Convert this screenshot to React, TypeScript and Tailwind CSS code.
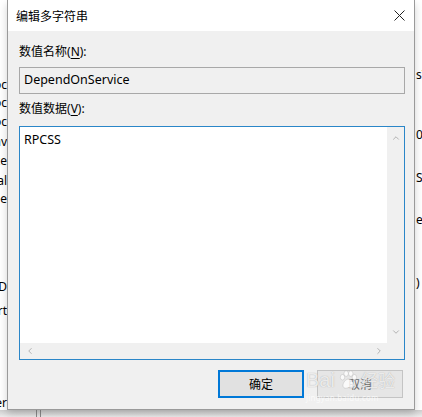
import { ChevronUp, ChevronDown, ChevronLeft, ChevronRight } from 'lucide-react'

const leftRows = [
  { text: 'Dependoc', top: 'mt-[77px]' },
  { text: 'Groupoc', top: 'mt-[3px]' },
  { text: 'Imageoc', top: 'mt-[4px]' },
  { text: 'ObjectNav', top: 'mt-[5px]' },
  { text: 'Servicece', top: 'mt-[4px]' },
  { text: 'Startal', top: 'mt-[5px]' },
  { text: 'Typee', top: 'mt-[4px]' },
  { text: 'RequiredMD', top: 'mt-[73px]' },
  { text: 'Start', top: 'mt-[9px]' },
  { text: 'Ownerer', top: 'mt-[77px]' },
]

const rightRows = [
  { text: 's\\', top: 'mt-[67px]' },
  { text: '0', top: 'mt-[44px]' },
  { text: 'Sy', top: 'mt-[27px]' },
  { text: 'el', top: 'mt-[26px]' },
  { text: ')', top: 'mt-[47px]' },
]

function Label({ text, hotkey }: { text: string; hotkey: string }) {
  return (
    <div className="h-4 leading-4 text-[12px] text-black">
      {text}(<span className="underline underline-offset-2">{hotkey}</span>):
    </div>
  )
}

function Paw() {
  return (
    <svg viewBox="0 0 24 24" className="w-[22px] h-[22px] mx-[2px]" fill="rgba(255,255,255,0.8)" stroke="rgba(150,150,150,0.5)" strokeWidth={0.6}>
      <ellipse cx="6" cy="9" rx="2.4" ry="3" />
      <ellipse cx="10" cy="5" rx="2.4" ry="3" />
      <ellipse cx="15" cy="5" rx="2.4" ry="3" />
      <ellipse cx="19" cy="9" rx="2.4" ry="3" />
      <path d="M12.5 11c-3 0-6 4-6 7 0 2 1.5 3 3 3 1.2 0 2-.6 3-.6s1.8.6 3 .6c1.5 0 3-1 3-3 0-3-3-7-6-7z" />
    </svg>
  )
}

export default function App() {
  return (
    <div className="w-[422px] h-[417px] overflow-hidden bg-white font-['Noto_Sans','Noto_Sans_CJK_SC',sans-serif] text-black">
      <div className="flex h-[410px]">
        {/* Background window, left edge */}
        <div className="w-[7px] shrink-0 flex flex-col text-[12px] leading-4">
          {leftRows.map((r) => (
            <div key={r.text} className={`${r.top} flex justify-end overflow-hidden whitespace-nowrap`}>
              {r.text}
            </div>
          ))}
        </div>

        {/* Dialog */}
        <div className="relative w-[408px] shrink-0 flex flex-col border-x border-b border-[#9a9a9a] bg-[#f0f0f0] shadow-[0_4px_8px_rgba(0,0,0,0.18)]">
          {/* Title bar */}
          <div className="h-[31px] bg-white flex items-center justify-between pl-[8px] pr-[9px]">
            <span className="text-[12px] leading-4 font-['Noto_Sans_CJK_SC',sans-serif]">编辑多字符串</span>
            <svg viewBox="0 0 11 11" className="w-[11px] h-[11px]" stroke="#222" strokeWidth={1}>
              <path d="M0.5 0.5L10.5 10.5M10.5 0.5L0.5 10.5" />
            </svg>
          </div>

          {/* Body */}
          <div className="flex flex-col pl-[11px] pt-[13px]">
            <Label text="数值名称" hotkey="N" />
            <div className="mt-[7px] w-[386px] h-[27px] border border-[#a8a8a8] bg-[#f0f0f0] flex items-center pl-[4px] text-[12.5px]">
              DependOnService
            </div>

            <div className="mt-[7px]">
              <Label text="数值数据" hotkey="V" />
            </div>
            <div className="mt-[9px] w-[386px] h-[234px] border border-[#2a86c8] bg-white flex flex-col">
              <div className="flex flex-1 min-h-0">
                <div className="flex-1 pl-[4px] pt-[3px] text-[12.5px] leading-5">RPCSS</div>
                <div className="w-[17px] bg-[#f0f0f0] flex flex-col items-center justify-between py-[6px]">
                  <ChevronUp className="w-[10px] h-[10px] text-[#a6a6a6]" strokeWidth={2} />
                  <ChevronDown className="w-[10px] h-[10px] text-[#a6a6a6]" strokeWidth={2} />
                </div>
              </div>
              <div className="h-[16px] bg-[#f0f0f0] flex items-center justify-between pl-[5px] pr-[20px]">
                <ChevronLeft className="w-[10px] h-[10px] text-[#a6a6a6]" strokeWidth={2} />
                <ChevronRight className="w-[10px] h-[10px] text-[#a6a6a6]" strokeWidth={2} />
              </div>
            </div>

            {/* Buttons */}
            <div className="mt-[10px] flex justify-end gap-[13px] pr-[11px]">
              <button className="w-[86px] h-[28px] border-2 border-[#0078d7] bg-[#e1e1e1] text-[12px] font-['Noto_Sans_CJK_SC',sans-serif]">
                确定
              </button>
              <button className="w-[86px] h-[28px] border border-[#c4c4c4] bg-[#e6e6e6] text-[12px] text-[#6a6a6a] font-['Noto_Sans_CJK_SC',sans-serif]">
                取消
              </button>
            </div>
          </div>

          {/* Watermark */}
          <div className="absolute left-[298px] top-[368px] flex flex-col items-start pointer-events-none select-none">
            <div className="flex items-center text-white/75 [text-shadow:0_0_1px_rgba(120,120,120,0.6)]">
              <span className="text-[20px] leading-6 font-['Liberation_Sans',sans-serif]">Bai</span>
              <Paw />
              <span className="text-[17px] leading-6 font-['Noto_Sans_CJK_SC',sans-serif]">经验</span>
            </div>
            <span className="text-[8px] leading-3 text-white/70 tracking-wide">jingyan.baidu.com</span>
          </div>
        </div>

        {/* Background window, right edge */}
        <div className="w-[7px] shrink-0 flex flex-col text-[12px] leading-4 pl-[1px] overflow-hidden">
          {rightRows.map((r) => (
            <div key={r.text} className={`${r.top} whitespace-nowrap`}>
              {r.text}
            </div>
          ))}
        </div>
      </div>

      {/* Strip under the dialog */}
      <div className="flex h-[7px] bg-gradient-to-b from-[#cfcfcf] to-[#ececec]">
        <div className="ml-[36px] w-[1px] bg-[#8a8a8a]" />
        <div className="ml-[3px] w-[1px] bg-[#8a8a8a]" />
      </div>
    </div>
  )
}
